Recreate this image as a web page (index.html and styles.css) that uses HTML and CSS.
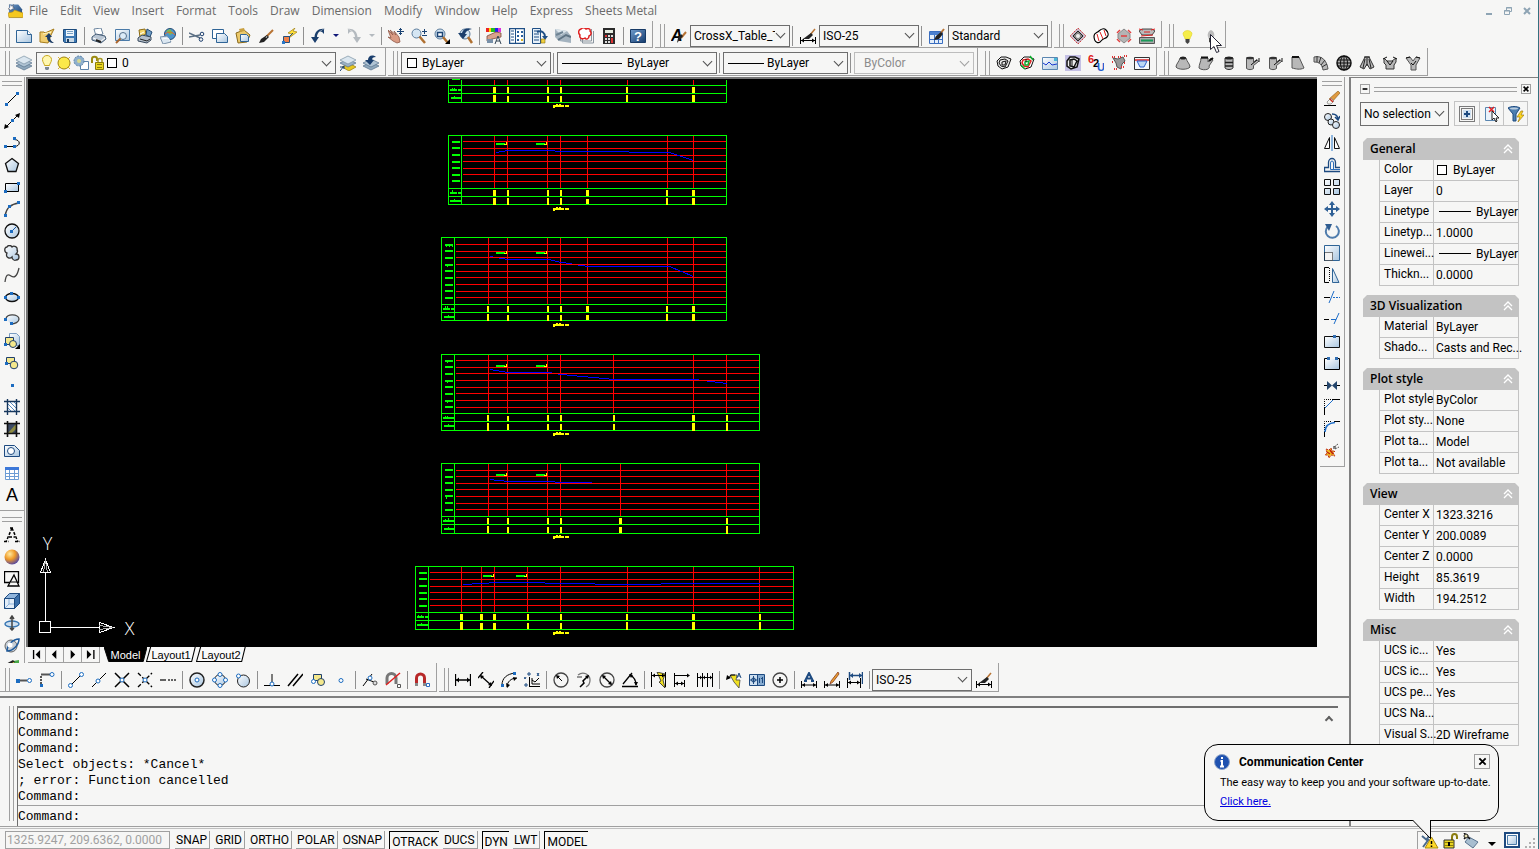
FILE: index.html
```html
<!DOCTYPE html>
<html lang="en">
<head>
<meta charset="utf-8">
<title>Drawing editor</title>
<link rel="stylesheet" href="styles.css">
</head>
<body>
<svg class="sprite" aria-hidden="true">
<defs>
<linearGradient id="gb" x1="0" y1="0" x2="1" y2="1"><stop offset="0" stop-color="#fff"/><stop offset="1" stop-color="#a9c6e0"/></linearGradient>
<linearGradient id="gg" x1="0" y1="0" x2="0" y2="1"><stop offset="0" stop-color="#ffe98a"/><stop offset="1" stop-color="#d8a010"/></linearGradient>
<linearGradient id="gn" x1="0" y1="0" x2="1" y2="1"><stop offset="0" stop-color="#6f9ccc"/><stop offset="1" stop-color="#143a6c"/></linearGradient>
<radialGradient id="go" cx=".35" cy=".3" r=".8"><stop offset="0" stop-color="#ffe9a0"/><stop offset=".45" stop-color="#f09a28"/><stop offset="1" stop-color="#3a3ab8"/></radialGradient>
<symbol id="app" viewBox="0 0 16 16"><path d="M1 1h10l4 5v9H1z" fill="url(#gn)"/><path d="M2 1l2 2 2-2-1 3 2 1-3 1-1 2-1-2H0l2-2z" fill="#fff" stroke="#223" stroke-width=".4"/><path d="M0 10l5-1 2-2 9 3v5H1z" fill="#f4c820" stroke="#b88a10" stroke-width=".6"/></symbol>
<symbol id="new" viewBox="0 0 16 16"><path d="M.5 2.500h11l4 4v8H.5z" fill="url(#gb)" stroke="#2f6496"/><path d="M11.500 2.500v4h4" fill="#fff" stroke="#2f6496"/></symbol>
<symbol id="open" viewBox="0 0 16 16"><path d="M1 4h4l1 1 9-4-3 6-3 8-8-1z" fill="#f0cd70" stroke="#a67c1c"/><path d="M4 6l8-2-4 4" fill="none" stroke="#fff4c0"/><path d="M15 15c-4 0-7-2-7-6H6l4-4 3 4h-2c0 3 2 5 4 6z" fill="#1d3d66"/></symbol>
<symbol id="save" viewBox="0 0 16 16"><path d="M1.500 1.500h13v13h-12l-1-1z" fill="#3d79b4" stroke="#1c4a7c"/><path d="M4 2h8v6H4z" fill="#eef5fb"/><path d="M5 3.500h6M5 5.500h6" stroke="#78a0c4"/><path d="M4 10h8v4H4z" fill="#c9d8e4"/><path d="M5 11h2v3H5z" fill="#1c3c60"/></symbol>
<symbol id="print" viewBox="0 0 16 16"><path d="M3 1l7-1 2 6-7 2z" fill="#fff" stroke="#6d86a0"/><path d="M1 9l4-3 9 2 1 3-5 4-9-3z" fill="#b9c6d4" stroke="#435a74"/><path d="M2 10l8 3 4-3" fill="none" stroke="#fff"/><path d="M5 12l5 2" stroke="#222" stroke-width="2"/></symbol>
<symbol id="preview" viewBox="0 0 16 16"><path d="M1.500 1.500h14v11h-14z" fill="url(#gb)" stroke="#4a7aa8"/><circle cx="9" cy="8" r="3.500" fill="#dcebf7" stroke="#54708c"/><path d="M6.500 10.500L2 15" stroke="#a8642c" stroke-width="2"/></symbol>
<symbol id="publish" viewBox="0 0 16 16"><path d="M2 2l6-1 1 5-6 3z" fill="#f6d668" stroke="#8a6a14"/><path d="M10 1l5 3-2 5-4-2z" fill="#6f9cc4" stroke="#244c74"/><path d="M1 10l4-3 9 2v3l-4 3-9-2z" fill="#b5c0cc" stroke="#36485c"/><path d="M3 11l7 2 3-2" stroke="#222" fill="none"/><path d="M3 6l4-2" stroke="#fff"/></symbol>
<symbol id="web" viewBox="0 0 16 16"><circle cx="10" cy="6" r="5.500" fill="#4e94cc" stroke="#244c74"/><path d="M6 3l4-2 3 4-3 2z" fill="#7cb854"/><path d="M5 6c3-3 8-2 10 1" fill="none" stroke="#e06a30"/><path d="M0 9l7-1 4 6-8 2z" fill="#dbe7f1" stroke="#7a92aa"/><path d="M2 11l6-1 2 3" fill="none" stroke="#fff"/></symbol>
<symbol id="cut" viewBox="0 0 16 16"><path d="M0 5l11 5M0 9l11-2" stroke="#5b6f84" stroke-width="1.500"/><circle cx="13" cy="6" r="1.800" fill="none" stroke="#1d3f6e"/><circle cx="12" cy="11.500" r="1.800" fill="none" stroke="#1d3f6e"/></symbol>
<symbol id="copy" viewBox="0 0 16 16"><path d="M.5 1.500h11v9H.5z" fill="#fff" stroke="#2f6496"/><path d="M4.500 5.500h8l3 3v6h-11z" fill="url(#gb)" stroke="#2f6496"/></symbol>
<symbol id="paste" viewBox="0 0 16 16"><path d="M1 5l8-3 6 5-3 7-9 1z" fill="#ecc96a" stroke="#8a6a1c"/><path d="M4 1l5-1 1 3-5 1z" fill="#c9a040"/><path d="M5.500 6.500h6l2 2v5h-8z" fill="url(#gb)" stroke="#2f6496"/></symbol>
<symbol id="match" viewBox="0 0 16 16"><path d="M15 2L8 9" stroke="#b87333" stroke-width="2"/><path d="M9 7l2 2-5 5-5 1 2-4z" fill="#222"/><path d="M8 10l1-2" stroke="#bbb"/></symbol>
<symbol id="block" viewBox="0 0 16 16"><path d="M14 0L7 5l4 1-3 4 8-6-4-1z" fill="#ffe038" stroke="#a08010" stroke-width=".7"/><path d="M2.500 8.500h6v6h-6z" fill="#f08048" stroke="#27507c"/><path d="M1 13h3v3H1z" fill="#2a78c8"/><path d="M8 9l4-4" stroke="#27507c"/></symbol>
<symbol id="undo" viewBox="0 0 16 16"><path d="M15 1C9 0 5 3 4.500 9H1l4 6 4-6H7c0-3 2-7 8-8z" fill="#1b3f6d"/><path d="M14 1v5c-2-3-4-3-5-2z" fill="#1b3f6d"/></symbol>
<symbol id="redo" viewBox="0 0 16 16"><path d="M1 1c6-1 10 2 10.500 8H15l-4 6-4-6h2C9 6 7 2 1 1z" fill="#b4babf"/><path d="M2 1v5c2-3 4-3 5-2z" fill="#b4babf"/></symbol>
<symbol id="pan" viewBox="0 0 16 16"><path d="M0 2l5 5-3-5 6 5-2-4 5 6 1 5-3 1-4-2-5-4 3 1z" fill="#d99b84" stroke="#8f5848" stroke-width=".8"/><path d="M12.500 0v7M9 3.500h7M11 1.500h3M11 5.500h3" stroke="#1c4474" fill="none"/></symbol>
<symbol id="zoomrt" viewBox="0 0 16 16"><circle cx="5.500" cy="5.500" r="4.500" fill="#d5e6f3" stroke="#5c7c9c"/><path d="M8.500 8.500L14 15" stroke="#b07030" stroke-width="2.500"/><path d="M11 3.500h5M13.500 1v5M11 7.500h5" stroke="#1c4474"/></symbol>
<symbol id="zoomwin" viewBox="0 0 16 16"><circle cx="6" cy="6" r="5" fill="#d5e6f3" stroke="#5c7c9c"/><path d="M3.500 4.500h5v4h-5z" fill="#fff" stroke="#1c4474" stroke-width="1.500"/><path d="M9 9l5 6" stroke="#b07030" stroke-width="2.500"/><path d="M16 11v5h-5z"/></symbol>
<symbol id="zoomprev" viewBox="0 0 16 16"><circle cx="8" cy="6" r="5" fill="#d5e6f3" stroke="#5c7c9c"/><path d="M11 9l4 6" stroke="#b07030" stroke-width="2.500"/><path d="M15 1C10-1 6 1 5 5H1l5 6 4-5H8c1-3 3-4 7-5z" fill="#1b3f6d"/></symbol>
<symbol id="props" viewBox="0 0 16 16"><path d="M0 0h5v4H0z" fill="#e22"/><path d="M5 0h4v4H5z" fill="#2b2"/><path d="M9 0h4v4H9z" fill="#22e"/><path d="M3 0h2v4H3z" fill="#fd0"/><path d="M12 0h3v4h-3z" fill="#d3d"/><path d="M1 8l9-4 5 1v4L6 11l-5 2z" fill="#d9a28c" stroke="#7c4a3c" stroke-width=".8"/><path d="M9 16l3-8 3 8M10 13h4" fill="none" stroke="#345"/><path d="M1 11h6v4H1z" fill="#7890a8"/></symbol>
<symbol id="dcenter" viewBox="0 0 16 16"><path d="M.5.500h15v15H.5z" fill="#fff" stroke="#1f4f86" stroke-width="1.500"/><path d="M6.500 0v16" stroke="#1f4f86"/><path d="M2 3h3M2 6h3M2 9h3M2 12h3" stroke="#1f4f86"/><path d="M8 3h2v2H8zM12 3h2v2h-2zM8 7h2v2H8zM12 7h2v2h-2zM8 11h2v2H8z" fill="#2a5f9c"/><path d="M12 11h2v2h-2z" fill="#d8b020"/></symbol>
<symbol id="tools" viewBox="0 0 16 16"><path d="M.5.500h8v15h-8z" fill="#e7f0f8" stroke="#1f4f86"/><path d="M2 3h5M2 6h5M2 9h5M2 12h5" stroke="#1f4f86"/><path d="M5 4c5-2 8 1 8 5" fill="none" stroke="#1f4f86" stroke-width="2"/><path d="M10 8h6l-3 4z" fill="#1f4f86"/><path d="M9 11h4v4H9z" fill="#f0d040" stroke="#8a7010" stroke-width=".6"/></symbol>
<symbol id="sheets" viewBox="0 0 16 16"><path d="M0 1l12 2 4 5v7L4 13l-4-4z" fill="#a4b3bf"/><path d="M0 1l12 2-6 4z" fill="#dce6ec"/><path d="M3 12l8-5 5 2" fill="none" stroke="#5f7484" stroke-width="2"/><path d="M1 7l7-3" stroke="#6f8494" stroke-width="2"/></symbol>
<symbol id="markup" viewBox="0 0 16 16"><path d="M4.500 5v10h11V3M2.500 3v10h11V1" fill="none" stroke="#8a959f"/><path d="M3 1c2-2 4-1 5 0 2-1 5 0 4 2 2 2 1 4-1 5 0 3-3 4-4 2-3 2-6 0-5-3C0 5 0 2 3 1z" fill="#fff" stroke="#e02020" stroke-width="1.500"/></symbol>
<symbol id="calc" viewBox="0 0 16 16"><path d="M2 0h12v16H2z" fill="#2b2b2b"/><path d="M4 2h8v3H4z" fill="#e4ece0"/><path d="M4 7h2v2H4zM7 7h2v2H7zM10 7h2v2h-2zM4 10h2v2H4zM7 10h2v2H7zM4 13h2v2H4zM7 13h2v2H7z" fill="#ddd"/><path d="M4 7h2v2H4zM10 10h2v5h-2z" fill="#d33"/></symbol>
<symbol id="help" viewBox="0 0 16 16"><path d="M.5 1.500h15v13H.5z" fill="url(#gn)" stroke="#173a66"/><text x="8" y="13" text-anchor="middle" class="q">?</text></symbol>
<symbol id="tstyle" viewBox="0 0 16 16"><text x="0" y="13" class="ai">A</text><path d="M15 4l-5 6" stroke="#b87333" stroke-width="2"/><path d="M12 8l-6 7 1-5 3-4z" fill="#222"/></symbol>
<symbol id="dstyle" viewBox="0 0 16 16"><path d="M15 1l-5 6" stroke="#b87333" stroke-width="1.500"/><path d="M11 5l2 2-4 4H3z" fill="#222"/><path d="M.5 9v7M15.500 9v7M1 12.500h14" stroke="#000"/><path d="M1 12.500l3-2v4zM15 12.500l-3-2v4z"/></symbol>
<symbol id="tbstyle" viewBox="0 0 16 16"><path d="M.5 3.500h13v12H.5z" fill="#e4eefa" stroke="#3a6ec0"/><path d="M1 4h13v3H1z" fill="#4a80d0"/><path d="M1 11.500h13M5.500 7v8M9.500 7v8" stroke="#3a6ec0"/><path d="M15 1l-4 5" stroke="#b87333" stroke-width="2"/><path d="M12 4l2 2-4 5-5 1 2-4z" fill="#222"/></symbol>
<symbol id="sm1" viewBox="0 0 16 16"><path d="M8 0l8 8-8 8-8-8z" fill="#c8b8c8" stroke="#d04848" stroke-dasharray="2 1"/><path d="M8 3l5 5-5 5-5-5z" fill="#888" stroke="#222"/><circle cx="8" cy="8" r="2" fill="#eee"/></symbol>
<symbol id="sm2" viewBox="0 0 16 16"><path d="M1 8c0-3 3-3 5-5s5-3 7-1 3 5 1 7-4 1-6 4-7 2-7-5z" fill="#fff" stroke="#000" stroke-width="1.200"/><path d="M4 6l2 7M7 4l3 7M11 2l2 6" stroke="#e02020"/></symbol>
<symbol id="sm3" viewBox="0 0 16 16"><path d="M8 1l6 5v4l-6 5-6-5V6z" fill="#b4b4b4" stroke="#888"/><path d="M1 5l3-3M12 2l3 3M1 11l3 3M12 14l3-3M5 8h6" stroke="#e04040" stroke-width="1.500"/></symbol>
<symbol id="sm4" viewBox="0 0 16 16"><path d="M0 3l3-2h10l3 2-3 4H3z" fill="#bbb" stroke="#222" stroke-width=".8"/><path d="M0 1l4 1M12 2l4-1M5 4h6M2 8l12-1" stroke="#e02020"/><path d="M.5 9.500h15v6H.5z" fill="#aaa" stroke="#555"/><path d="M2 12.500h12" stroke="#1a9a5a" stroke-width="2"/></symbol>
<symbol id="bulb" viewBox="0 0 16 16"><path d="M5 11c0-2-2-3-2-6a5 4.500 0 0 1 9 0c0 3-2 4-2 6z" fill="#f6ee4a" stroke="#e0d020" stroke-width=".6"/><path d="M5.500 11h4v3l-2 2-2-2z" fill="#444"/></symbol>
<symbol id="bulboff" viewBox="0 0 16 16"><path d="M6 11c-2-3-2-7 2-9 4 2 4 6 2 9z" fill="#bbb"/><path d="M6 10h4v4l-2 1-2-1z" fill="#444"/></symbol>
<symbol id="layers" viewBox="0 0 16 16"><path d="M0 11l8-4 8 4-8 4z" fill="#8fa8bc" stroke="#54708a" stroke-width=".7"/><path d="M0 8l8-4 8 4-8 4z" fill="#b0c4d4" stroke="#54708a" stroke-width=".7"/><path d="M0 5l8-4 8 4-8 4z" fill="#dae6ef" stroke="#7890a4" stroke-width=".7"/></symbol>
<symbol id="lcur" viewBox="0 0 16 16"><path d="M2 12l7-4 7 4-7 4z" fill="#e8c820" stroke="#927810" stroke-width=".7"/><path d="M0 8l8-4 8 4-8 4z" fill="#9cb2c6" stroke="#54708a" stroke-width=".7"/><path d="M0 5l8-4 8 4-8 4z" fill="#dae6ef" stroke="#7890a4" stroke-width=".7"/><path d="M0 16l4-5v3M0 12h4" fill="none" stroke="#174076"/></symbol>
<symbol id="lprev" viewBox="0 0 16 16"><path d="M0 11l8-4 8 4-8 4z" fill="#8fa8bc" stroke="#54708a" stroke-width=".7"/><path d="M0 8l8-4 8 4-8 4z" fill="#b0c4d4" stroke="#54708a" stroke-width=".7"/><path d="M13 2C9-1 5 1 5 5H2l5 5 4-5H9c0-2 1-3 4-3z" fill="#1b3f6d"/></symbol>
<symbol id="lamp" viewBox="0 0 16 16"><path d="M5.500 10.500c0-2-2-3-2-6a4.500 4 0 0 1 9 0c0 3-2 4-2 6z" fill="#fff8b0" stroke="#c8a820"/><path d="M6 12h4v2l-1 1H7l-1-1z" fill="#7c8894"/></symbol>
<symbol id="sun" viewBox="0 0 16 16"><path d="M2 2l2 2M14 2l-2 2M2 14l2-2M14 14l-2-2" stroke="#d8b030"/><circle cx="8" cy="8" r="6" fill="#fbe94a" stroke="#a08414"/></symbol>
<symbol id="freeze" viewBox="0 0 16 16"><path d="M7.500 6.500h8v8h-8z" fill="#fff" stroke="#5a82aa"/><circle cx="6" cy="6" r="5" fill="#8fb0cc" stroke="#5a82aa" stroke-dasharray="2 1"/><circle cx="6" cy="6" r="2" fill="#d6d890"/></symbol>
<symbol id="lock" viewBox="0 0 16 16"><path d="M2 8V4c0-3 5-3 5 0v2" fill="none" stroke="#9a8a10" stroke-width="2"/><path d="M8 7V5c0-2 4-2 4 0v2" fill="none" stroke="#a89820" stroke-width="1.500"/><path d="M5.500 7.500h8v7h-8z" fill="#e8d420" stroke="#8a7c0c"/><path d="M7 9.500h5M7 12.500h5" stroke="#8a7c0c"/></symbol>
<symbol id="cc" viewBox="0 0 16 16"><path d="M1 6l4-4h5l5 2-3 8-6 2-4-3z" fill="#e8e8e8" stroke="#111"/><path d="M4 5l5-1 3 2-3 6-4-1-2-3zM6 7l4-1-1 4-3 0z" fill="none" stroke="#111"/></symbol>
<symbol id="ccc" viewBox="0 0 16 16"><path d="M1 6l4-4h5l5 2-3 8-6 2-4-3z" fill="#fff" stroke="#111"/><path d="M4 5l5-1 3 2-3 6-4-1-2-3z" fill="none" stroke="#e02020" stroke-width="1.500"/><path d="M6 7l4-1-1 4-3 0zM11 1l3 4M2 10l4 4" fill="none" stroke="#10b030" stroke-width="1.500"/><path d="M7 4v3" stroke="#111"/></symbol>
<symbol id="prof" viewBox="0 0 16 16"><path d="M.5 2.500h15v12H.5z" fill="url(#gb)" stroke="#5a86b0"/><path d="M1 8l3 2 3-3 3 3 5-1" fill="none" stroke="#1838d0"/><path d="M12 3h3v3h-3z" fill="#48b8d8"/></symbol>
<symbol id="ccb" viewBox="0 0 16 16"><path d="M0 0h16v16H0z" fill="#c4c0e4"/><path d="M2 6l3-4h5l4 2-2 8-6 2-4-3zM5 5l4-1 3 2-3 6-4-1z" fill="#eee" stroke="#111" stroke-width="1.500"/><path d="M7 4v8" stroke="#111"/></symbol>
<symbol id="six" viewBox="0 0 16 16"><text x="0" y="8" class="s6 red">6</text><text x="5" y="12" class="s6">2</text><text x="9" y="16" class="s6 blu">U</text></symbol>
<symbol id="bits" viewBox="0 0 16 16"><path d="M2 3l5 1 5-2 2 4-3 3-1 5-4-2-1-4z" fill="#999" stroke="#555"/><path d="M1 2h3M7 2h3M13 1h3M1 7h2M13 8h2M3 14h3M10 12h3" stroke="#e03030" stroke-width="2" stroke-dasharray="1 1"/></symbol>
<symbol id="chan" viewBox="0 0 16 16"><path d="M.5 2.500h15v12H.5z" fill="#f4f8fc" stroke="#333"/><path d="M1 5h14" stroke="#e02020" stroke-width="1.500"/><path d="M3 6l3 6h4l3-6z" fill="#bcd8f4" stroke="#2a60d0"/></symbol>
<symbol id="p1" viewBox="0 0 16 16"><path d="M5 3h6c1 4 4 6 4 9-2 3-12 3-14 0 0-3 3-5 4-9z" fill="#b8b8b8" stroke="#555"/><ellipse cx="8" cy="3" rx="3" ry="1.500" fill="#222"/></symbol>
<symbol id="p2" viewBox="0 0 16 16"><path d="M3 3h7v4l3-4 2 2-4 6c2 4-7 5-10 2 0-4 2-6 2-10z" fill="#b8b8b8" stroke="#555"/><path d="M3 2.500h7M11 6l4-3" stroke="#111" stroke-width="2"/></symbol>
<symbol id="p3" viewBox="0 0 16 16"><path d="M4 3v10c2 2 6 2 8 0V3z" fill="#b8b8b8" stroke="#333"/><ellipse cx="8" cy="3" rx="4" ry="1.500" fill="#222"/><path d="M4 7.500h8M4 11h8" stroke="#222" stroke-width="1.500"/></symbol>
<symbol id="p4" viewBox="0 0 16 16"><path d="M2.500 3.500v10c2 1.500 5 1.500 7 0v-3l5-4-1.500-2-3.500 2.500v-3.500z" fill="#b8b8b8" stroke="#555"/><ellipse cx="6" cy="3" rx="4" ry="1.300" fill="#333"/><path d="M15 3v4M7 10l6-5" stroke="#111"/></symbol>
<symbol id="p5" viewBox="0 0 16 16"><path d="M2 2h7l5 11c-4 2-8 1-12 0z" fill="#b8b8b8" stroke="#555"/><path d="M2 2h7" stroke="#111" stroke-width="2"/></symbol>
<symbol id="p6" viewBox="0 0 16 16"><path d="M1 2c8-2 13 4 14 12l-5 1C9 10 7 7 1 7z" fill="#b8b8b8" stroke="#555"/><path d="M4 1v6M8 2L6 8M12 5L8 10M14 9l-5 3" stroke="#333"/></symbol>
<symbol id="p7" viewBox="0 0 16 16"><circle cx="8" cy="8" r="7" fill="#aaa" stroke="#111" stroke-width="1.500"/><path d="M1 8h14M2 5h12M2 11h12M8 1v14" stroke="#111"/><ellipse cx="8" cy="8" rx="3.500" ry="7" fill="none" stroke="#111"/></symbol>
<symbol id="p8" viewBox="0 0 16 16"><path d="M6 2h4l5 10-4 2-3-5-3 5-4-2z" fill="#b8b8b8" stroke="#333"/><path d="M5 2h6M8 3v8M6 4L4 13M10 4l2 9" stroke="#222"/></symbol>
<symbol id="p9" viewBox="0 0 16 16"><path d="M2 3l3 3h5l4-3v4l-2 3v4H4v-4L2 8z" fill="#b8b8b8" stroke="#333"/><path d="M1 4l4-2M15 4l-4-2M5 6l3 4 3-4" stroke="#111" fill="none"/></symbol>
<symbol id="p10" viewBox="0 0 16 16"><path d="M1 3l4-1 3 4 3-4 4 1-4 7v5H6v-5z" fill="#b8b8b8" stroke="#555"/><path d="M1 3l4-1M11 2l4 1M6 8l2 2 3-4" fill="none" stroke="#111"/></symbol>
<symbol id="line" viewBox="0 0 16 16"><path d="M2 14L14 2" class="k"/><path d="M1 12h3v3H1zM12 1h3v3h-3z" class="n"/></symbol>
<symbol id="xline" viewBox="0 0 16 16"><path d="M2 14L14 2" class="k"/><path d="M0 16l1-5 4 3zM16 0l-1 5-4-3z"/><path d="M7 6h3v3H7z" class="n"/></symbol>
<symbol id="pline" viewBox="0 0 16 16"><path d="M1 11.500h9c7 0 7-7 0-7" class="k"/><path d="M0 10h3v3H0zM9 10h3v3H9zM9 2h3v3H9z" class="n"/></symbol>
<symbol id="poly" viewBox="0 0 16 16"><path d="M8 1.500l6.500 5-2.500 8H4L1.500 6.500z" fill="url(#gb)" stroke="#111" stroke-width="1.300"/></symbol>
<symbol id="rect" viewBox="0 0 16 16"><path d="M1.500 4.500h13v8h-13z" fill="url(#gb)" stroke="#000"/><path d="M0 11h3v3H0zM13 3h3v3h-3z" class="n"/></symbol>
<symbol id="arc" viewBox="0 0 16 16"><path d="M1 15C2 8 6 3 15 2" class="g"/><path d="M0 13h3v3H0zM4 4h3v3H4zM13 0h3v3h-3z" class="n"/></symbol>
<symbol id="circle" viewBox="0 0 16 16"><circle cx="8" cy="8" r="7" fill="url(#gb)" stroke="#111" stroke-width="1.300"/><path d="M8 8l4-4" stroke="#1c5aa8"/><path d="M6 7h3v3H6z" class="n"/></symbol>
<symbol id="cloud" viewBox="0 0 16 16"><path d="M3 8C0 7 0 2 3 2c1-2 4-2 5 0 2-2 6 0 5 3 1 1 0 3-1 4 4 0 4 6 0 6-2 1-4-1-4-3-2 2-7 1-5-4z" fill="url(#gb)" stroke="#333" stroke-width="1.300"/></symbol>
<symbol id="spline" viewBox="0 0 16 16"><path d="M1 15c1-8 3-8 6-6s6 1 8-8" class="g"/></symbol>
<symbol id="ellip" viewBox="0 0 16 16"><ellipse cx="8" cy="8.500" rx="6.500" ry="4" fill="url(#gb)" stroke="#111" stroke-width="1.300"/><path d="M0 7h3v3H0zM13 7h3v3h-3zM6 3h3v3H6z" class="n"/></symbol>
<symbol id="earc" viewBox="0 0 16 16"><path d="M2 8c0-6 13-5 13 0 0 3-4 5-8 5z" fill="url(#gb)" stroke="none"/><path d="M2 8c0-6 13-5 13 0 0 3-4 5-8 5" class="g"/><path d="M0 7h3v3H0zM6 11h3v3H6z" class="n"/></symbol>
<symbol id="insblk" viewBox="0 0 16 16"><path d="M5.500 0.500h7l3 3v9h-10z" fill="url(#gb)" stroke="#7a9cc0"/><path d="M1.500 4.500h8v7h-8z" class="y"/><circle cx="9" cy="11" r="3.500" class="y"/><path d="M0 10h3v3H0z" class="n"/><path d="M16 11v5h-5z"/></symbol>
<symbol id="mkblk" viewBox="0 0 16 16"><path d="M2.500 2.500h8v6h-8z" class="y"/><circle cx="10" cy="10" r="3.800" class="y"/><path d="M1 7h3v3H1z" class="n"/></symbol>
<symbol id="point" viewBox="0 0 16 16"><path d="M7 7h3v3H7z" class="n"/></symbol>
<symbol id="hatch" viewBox="0 0 16 16"><path d="M3 3h10v9H3z" fill="#fff"/><path d="M3 8l5 5M3 4l9 9M6 3l7 7M10 3l3 3" stroke="#5a8cc0"/><path d="M0 2.500h16M0 12.500h16M3.500 0v16M12.500 0v16" stroke="#16365c" stroke-width="1.400"/></symbol>
<symbol id="grad" viewBox="0 0 16 16"><path d="M3 3h10v9H3z" fill="#3c4a64"/><path d="M4 12l8-9v5l-4 4z" fill="#8c8a40"/><path d="M0 2.500h16M0 12.500h16M3.500 0v16M12.500 0v16" stroke="#111" stroke-width="1.600"/></symbol>
<symbol id="region" viewBox="0 0 16 16"><path d="M.5 2.500h10l5 5v6H.5z" fill="url(#gb)" stroke="#1d4a80"/><circle cx="7" cy="8" r="3.500" fill="#fff" stroke="#1d4a80"/></symbol>
<symbol id="table" viewBox="0 0 16 16"><path d="M1.500 2.500h13v12h-13z" fill="#fff" stroke="#6c9cd4"/><path d="M1 2h14v3H1z" fill="#3c78d8"/><path d="M1 8.500h14M1 11.500h14M5.500 5v9M10.500 5v9" stroke="#6c9cd4"/></symbol>
<symbol id="mtext" viewBox="0 0 16 16"><text x="8" y="14" text-anchor="middle" class="ma">A</text></symbol>
<symbol id="dasha" viewBox="0 0 16 16"><path d="M8 1L2 15M8 1l6 14M0 14.500h5M11 14.500h5M5 10h6M6 1h4" stroke="#000" stroke-width="1.500" stroke-dasharray="3 1.500" fill="none"/></symbol>
<symbol id="ball" viewBox="0 0 16 16"><circle cx="8" cy="8" r="7.500" fill="url(#go)"/></symbol>
<symbol id="shapes" viewBox="0 0 16 16"><path d="M.5.500h14v11H.5z" class="k" stroke-width="1.300"/><path d="M10 4l5 11H4z" fill="#f6f6f5" stroke="#000" stroke-width="1.300"/><path d="M7 11h6" class="k"/></symbol>
<symbol id="cube" viewBox="0 0 16 16"><path d="M.5 5.500l5-5h10v10l-5 5H.5z" fill="#8fb4dc" stroke="#1d4a80"/><path d="M.5 5.500h10v10H.5z" fill="#e4eef8" stroke="#1d4a80"/><path d="M10.500 5.500l5-5v10l-5 5z" fill="#3a6ea8" stroke="#1d4a80"/><path d="M1 15l4-4h5M5 6v5" fill="none" stroke="#8fb4dc"/></symbol>
<symbol id="orbit" viewBox="0 0 16 16"><ellipse cx="8" cy="9" rx="7" ry="3" fill="#cfe0f0" stroke="#3a78b4" stroke-width="1.500"/><path d="M8 1v14M6 4l2-3 2 3M6 13l2 2 2-2" fill="none" stroke="#444" stroke-width="1.500"/></symbol>
<symbol id="sph" viewBox="0 0 16 16"><circle cx="7" cy="9" r="6" fill="#c4ccd4" stroke="#666"/><path d="M3 14c6 0 12-6 12-12-6 0-12 6-12 12z" fill="none" stroke="#1d5a9c" stroke-width="1.500"/><circle cx="6" cy="8" r="2.500" fill="#fff"/></symbol>
<symbol id="land" viewBox="0 0 16 16"><path d="M1 6l8-4 6-1v12H1z" fill="#48a848"/><path d="M0 6l9-5 2 2-8 4z" fill="#222"/><path d="M4 6l6-3v5H4z" fill="#e8c838"/></symbol>
<symbol id="erase" viewBox="0 0 16 16"><path d="M0 14.500h12" class="k"/><path d="M14 0l2 2-8 9-3-3z" fill="#e09a40" stroke="#8a5a18" stroke-width=".6"/><path d="M7 7l3 3-3 3H4l-1-2z" fill="#f4f4ee" stroke="#666" stroke-width=".6"/><path d="M6 8l3 3" stroke="#d03020" stroke-width="1.500"/></symbol>
<symbol id="mcopy" viewBox="0 0 16 16"><circle cx="4" cy="4" r="3.500" fill="url(#gb)" stroke="#222"/><circle cx="7" cy="9" r="3" fill="url(#gb)" stroke="#222"/><circle cx="12" cy="12" r="3.500" fill="url(#gb)" stroke="#222"/><path d="M8 1c4 0 6 2 6 6M11 4l3 3 2-4" fill="none" stroke="#1d4a80" stroke-width="1.500"/></symbol>
<symbol id="mirror" viewBox="0 0 16 16"><path d="M8 0v16" stroke="#2a78c8"/><path d="M5.500 2.500v11h-5zM10.500 2.500v11h5z" fill="#fff" stroke="#111"/></symbol>
<symbol id="offset" viewBox="0 0 16 16"><path d="M16 14.500H.5v-4h4V5.500a3.500 4 0 0 1 7 0v5H16" fill="none" stroke="#1d4a80" stroke-width="1.300"/><path d="M16 12.500H6.500V6a1.500 2 0 0 1 3 0v6" fill="none" stroke="#2a6cb8"/></symbol>
<symbol id="array" viewBox="0 0 16 16"><path d="M.5.500h6v6h-6zM9.500.500h6v6h-6zM.5 9.500h6v6h-6zM9.500 9.500h6v6h-6z" fill="url(#gb)" stroke="#111"/></symbol>
<symbol id="move" viewBox="0 0 16 16"><path d="M8 0l3 4H9v3h3V5l4 3-4 3V9H9v3h2l-3 4-3-4h2V9H4v2L0 8l4-3v2h3V4H5z" fill="#2f6096"/></symbol>
<symbol id="rot" viewBox="0 0 16 16"><path d="M4 3.500a6.500 6.500 0 1 0 8-.5" fill="none" stroke="#4f7cac" stroke-width="2"/><path d="M1 1h7L5 8z" fill="#2f5c90"/></symbol>
<symbol id="scale" viewBox="0 0 16 16"><path d="M.5.500h15v15H.5z" fill="url(#gb)" stroke="#2f6496"/><path d="M1 7.500h8v8H1z" fill="#f4f4f4"/><path d="M.5 7.500h8v8h-8z" fill="none" stroke="#000" stroke-dasharray="1 1"/></symbol>
<symbol id="stretch" viewBox="0 0 16 16"><path d="M8.500 1.500l6.500 14H8.500z" fill="url(#gb)" stroke="#2f6496"/><path d="M5 .5H.5v15H5" class="k"/><path d="M5.500 1v14" stroke="#000" stroke-dasharray="1 1"/></symbol>
<symbol id="trim" viewBox="0 0 16 16"><path d="M0 8.500h6" class="k"/><path d="M5 14L10 2M9 8.500h7" stroke="#1c6cc8" fill="none"/><path d="M11 8.500h1M14 8.500h1" stroke="#f6f6f5"/></symbol>
<symbol id="extend" viewBox="0 0 16 16"><path d="M0 8.500h5M7 8.500h1" class="k"/><path d="M7 8.500h5M10 13L15 2" stroke="#1c6cc8"/></symbol>
<symbol id="brkpt" viewBox="0 0 16 16"><path d="M.5 3.500h15v11H.5z" fill="url(#gb)" stroke="#111"/><path d="M9 2h3v3H9z" fill="#2f6cb0"/></symbol>
<symbol id="brk" viewBox="0 0 16 16"><path d="M1 4h14v10H1z" fill="url(#gb)"/><path d="M3 3.500H.5v11h15v-11H13" class="k"/><path d="M3 2h3v3H3zM11 2h3v3h-3z" fill="#2f6cb0"/></symbol>
<symbol id="join" viewBox="0 0 16 16"><path d="M0 8.500h5M11 8.500h5" class="k"/><path d="M3 4l5 4.500L3 13zM13 4L8 8.500l5 4.500z" fill="#24466c"/></symbol>
<symbol id="chamf" viewBox="0 0 16 16"><path d="M.5 16V9M8 .5h8" class="k"/><path d="M.5 9V.500H8" fill="none" stroke="#000" stroke-dasharray="1 1"/><path d="M1 9l8-8" stroke="#1c6cc8"/></symbol>
<symbol id="fillet" viewBox="0 0 16 16"><path d="M.5 16V10M10 .5h6" class="k"/><path d="M.5 9V.500H8" fill="none" stroke="#000" stroke-dasharray="1 1"/><path d="M1 11c0-6 4-9 10-9.500" fill="none" stroke="#1c6cc8" stroke-width="1.500"/></symbol>
<symbol id="explode" viewBox="0 0 16 16"><path d="M2 6l3 1 2-2 1 3 3 0-2 2 2 3-4-1-2 3-1-3-3 0 2-2z" fill="#f0c020" stroke="#c03018" stroke-dasharray="2 1"/><path d="M9 3h3v3H9z" fill="#888"/><path d="M10 4l4-3M11 6l4-2" stroke="#555" stroke-dasharray="2 1"/><path d="M3 9l3 2M6 7l3 4" stroke="#c02010" stroke-width="1.500"/></symbol>
<symbol id="o1" viewBox="0 0 16 16"><path d="M2 8.500h9" stroke="#555" stroke-width="2"/><path d="M0 7h4v4H0z" class="n"/><circle cx="13.500" cy="8.500" r="2" class="o"/></symbol>
<symbol id="o2" viewBox="0 0 16 16"><path d="M2 12V3" stroke="#555" stroke-width="2" stroke-dasharray="2 1"/><path d="M2 2.500h9" stroke="#555" stroke-width="2"/><path d="M1 12h3v3H1z" class="n"/><circle cx="13" cy="2.500" r="2" class="o"/></symbol>
<symbol id="o3" viewBox="0 0 16 16"><path d="M3 13L13 3" class="k"/><circle cx="2.500" cy="13.500" r="2" class="o"/><circle cx="13.500" cy="2.500" r="2" class="o"/></symbol>
<symbol id="o4" viewBox="0 0 16 16"><path d="M1 15L15 1" class="k"/><circle cx="7" cy="9" r="2" class="o"/></symbol>
<symbol id="o5" viewBox="0 0 16 16"><path d="M1 1l14 14M1 15L15 1" class="k" stroke-width="1.500"/><circle cx="8" cy="8" r="2" class="o"/></symbol>
<symbol id="o6" viewBox="0 0 16 16"><path d="M1 15L15 1M1 1l14 14" class="k" stroke-width="1.300" stroke-dasharray="4 2"/><circle cx="8" cy="8" r="2" class="o"/></symbol>
<symbol id="o7" viewBox="0 0 16 16"><path d="M0 8h6M8 8h2M11 8h2M14 8h2" stroke="#333" stroke-width="1.500"/></symbol>
<symbol id="o8" viewBox="0 0 16 16"><circle cx="8" cy="8" r="7" fill="url(#gb)" stroke="#222" stroke-width="1.500"/><circle cx="8" cy="8" r="2" class="o"/></symbol>
<symbol id="o9" viewBox="0 0 16 16"><circle cx="8" cy="8" r="5.500" fill="url(#gb)" stroke="#222"/><circle cx="8" cy="2.500" r="2" class="o"/><circle cx="8" cy="13.500" r="2" class="o"/><circle cx="2.500" cy="8" r="2" class="o"/><circle cx="13.500" cy="8" r="2" class="o"/></symbol>
<symbol id="o10" viewBox="0 0 16 16"><circle cx="8.500" cy="9" r="6" fill="url(#gb)" stroke="#222"/><circle cx="3.500" cy="4" r="2" class="o"/></symbol>
<symbol id="o11" viewBox="0 0 16 16"><path d="M8 2v9M0 13.500h16" class="k"/><circle cx="8" cy="12" r="2" class="o"/></symbol>
<symbol id="o12" viewBox="0 0 16 16"><path d="M1 14L11 2M6 14L16 2" class="k" stroke-width="1.500"/></symbol>
<symbol id="o13" viewBox="0 0 16 16"><path d="M3.500 2.500h8v6h-8z" class="y"/><circle cx="11" cy="10" r="3.500" class="y"/><circle cx="3.500" cy="9.500" r="2" class="o"/></symbol>
<symbol id="o14" viewBox="0 0 16 16"><circle cx="8" cy="8.500" r="2" class="o"/></symbol>
<symbol id="o15" viewBox="0 0 16 16"><path d="M1 14L10 2M4 7l8 3" class="k"/><circle cx="8" cy="6" r="2" class="o"/><circle cx="13" cy="11" r="2" fill="#ddd" stroke="#555"/></symbol>
<symbol id="o16" viewBox="0 0 16 16"><path d="M2 12V6a4 4 0 0 1 9 0v6" fill="none" stroke="#777" stroke-width="3"/><path d="M1 13L15 1" stroke="#e02020" stroke-width="1.500"/><path d="M12.500 12.500h3v3h-3z" fill="#fff" stroke="#555"/></symbol>
<symbol id="o17" viewBox="0 0 16 16"><path d="M2.500 12V6a4 4 0 0 1 8 0v6" fill="none" stroke="#b82828" stroke-width="3"/><path d="M1 11h3v3H1zM9 11h3v3H9z" fill="#888"/><path d="M12.500 11.500h3v3h-3z" fill="#fff" stroke="#2a6cc0"/></symbol>
<symbol id="d1" viewBox="0 0 16 16"><path d="M.5 2v12M15.500 2v12M1 8h14" class="k" stroke-width="1.300"/><path d="M1 8l3-2.500v5zM15 8l-3-2.500v5z"/></symbol>
<symbol id="d2" viewBox="0 0 16 16"><path d="M5 0L0 6M16 9l-5 7M3 4l10 9" class="k" stroke-width="1.300"/><path d="M2 3l4 1-3 3zM14 14l-4-1 3-3z"/></symbol>
<symbol id="d3" viewBox="0 0 16 16"><path d="M1 13C1 6 6 2 14 1M6 15c0-5 4-9 10-9" class="k"/><path d="M5 11l1 5 3-3zM16 6l-4-1 1 4z"/><path d="M0 12h3v3H0zM12 0h3v3h-3z" class="n"/></symbol>
<symbol id="d4" viewBox="0 0 16 16"><path d="M5.500 5v10M5 14.500h11M8 6v6h8M8 8l3 2 4-4" class="k"/><path d="M0 5l1 2 1-2M4 1h2v2H4zM13 1l2 3M15 1l-2 3M1 12h2v2H1z" fill="none" stroke="#1d4a80"/></symbol>
<symbol id="d5" viewBox="0 0 16 16"><circle cx="8" cy="8" r="7" fill="none" stroke="#444" stroke-width="1.300"/><path d="M9 9L4 4" class="k"/><path d="M3 3l4 1-3 3z"/></symbol>
<symbol id="d6" viewBox="0 0 16 16"><path d="M2 3c5-4 12-1 12 5 0 4-2 6-4 7M1 5h5" fill="none" stroke="#777" stroke-width="1.300"/><path d="M4 15l4-4-1-2 5-5" class="k" stroke-width="1.500"/><path d="M13 3l-1 4-3-3z"/></symbol>
<symbol id="d7" viewBox="0 0 16 16"><circle cx="8" cy="8" r="7" fill="none" stroke="#444" stroke-width="1.300"/><path d="M4 4l8 8" class="k" stroke-width="1.300"/><path d="M3 3l4 1-3 3zM13 13l-4-1 3-3z"/></symbol>
<symbol id="d8" viewBox="0 0 16 16"><path d="M0 14.500h16M1 12L10 1M8 3c4 2 6 5 6 10" class="k" stroke-width="1.300"/><path d="M7 2l4 1-2 3zM12 10h4l-2 4z"/></symbol>
<symbol id="d9" viewBox="0 0 16 16"><path d="M6 0l8 2-2 6 2 8-6-6 2-1z" fill="#f0e020" stroke="#222" stroke-width=".8"/><path d="M.5 0v15M14.500 0v15M1 3.500h13" class="k"/><path d="M1 3.500l3-2v4zM14 3.500l-3-2v4z"/></symbol>
<symbol id="d10" viewBox="0 0 16 16"><path d="M.5 1v14M1 3.500h14M10.500 8v7M1 11.500h9" class="k"/><path d="M16 3.500l-3-2v4zM10 11.500l-3-2v4zM1 11.500l3-2v4z"/></symbol>
<symbol id="d11" viewBox="0 0 16 16"><path d="M.5 1v14M5.500 1v14M10.500 1v14M15.500 1v14M1 5.500h14" class="k"/><path d="M5 5.500l-2-2v4zM6 5.500l2-2v4zM15 5.500l-2-2v4z"/></symbol>
<symbol id="d12" viewBox="0 0 16 16"><path d="M4 3h7l-1 5h4l-1 8-5-6z" fill="#f0e020" stroke="#444" stroke-width=".8"/><path d="M9 3H5L2 7" class="k"/><path d="M0 8l1-5 4 3z"/><path d="M11 6l2-5 2 5M12 4h2" fill="none" stroke="#1d4a80"/></symbol>
<symbol id="d13" viewBox="0 0 16 16"><path d="M.5 2.500h15v11H.5z" fill="#cfe0f0" stroke="#1d4a80"/><path d="M8 3h7v10H8z" fill="#86abd0"/><circle cx="4.500" cy="8" r="2" fill="none" stroke="#1d4a80"/><path d="M4.500 4v8M1 8h7M8.500 3v10M10.500 6v5M13.500 5v6M13 6l-1 1" stroke="#1d4a80"/></symbol>
<symbol id="d14" viewBox="0 0 16 16"><circle cx="8" cy="8" r="7" fill="none" stroke="#444" stroke-width="1.300"/><path d="M5 8h6M8 5v6" stroke="#000" stroke-width="1.500"/></symbol>
<symbol id="d15" viewBox="0 0 16 16"><path d="M4 9l4-8 4 8M5 6.500h6M3 9h3M10 9h3" fill="none" stroke="#1d4a80" stroke-width="2"/><path d="M.5 9v7M15.500 9v7M1 13h14" class="k"/><path d="M1 13l3-2v4zM15 13l-3-2v4z"/></symbol>
<symbol id="d16" viewBox="0 0 16 16"><path d="M14 0l1 2-6 8-3 2 1-3z" fill="#e8a030" stroke="#8a3a20" stroke-width=".8"/><path d="M.5 9v7M15.500 9v7M1 13h14" class="k"/><path d="M1 13l3-2v4zM15 13l-3-2v4z"/></symbol>
<symbol id="d17" viewBox="0 0 16 16"><path d="M2.500 0v8M15.500 0v12M3 3.500h12" stroke="#1d4a80" stroke-width="1.500"/><path d="M3 3.500l3-2.500v5zM15 3.500l-3-2.500v5z" fill="#1d4a80"/><path d="M.5 6v10M13.500 6v10M1 10.500h12" class="k"/><path d="M1 10.500l3-2v4zM13 10.500l-3-2v4z"/></symbol>
<symbol id="qadd" viewBox="0 0 16 16"><path d="M.5.500h15v15H.5z" fill="none" stroke="#000" stroke-dasharray="1 1"/><path d="M2.500 2.500h11v11h-11z" fill="none" stroke="#000" stroke-dasharray="1 1"/><path d="M4 4h8v8H4z" fill="#cfe0f0"/><path d="M8 5v6M5 8h6" stroke="#1d4a80" stroke-width="2"/></symbol>
<symbol id="qsel" viewBox="0 0 16 16"><path d="M1.500 1.500h10v13h-10z" fill="#eaf2fa" stroke="#5a86b0"/><path d="M5 1l5 5M10 1L5 6" stroke="#e02020" stroke-width="1.500"/><path d="M8 5v9l2-2 2 4 1-1-1-3h3z" fill="#fff" stroke="#222"/></symbol>
<symbol id="qfil" viewBox="0 0 16 16"><path d="M0 2c3-2 9-2 12 0L8 8v7H5V8z" fill="#4c7eb0" stroke="#1d4a80"/><ellipse cx="6" cy="2.500" rx="4" ry="1" fill="#bcd"/><path d="M13 5l-4 6h3l-2 5 6-7h-3l2-4z" fill="#ffd820" stroke="#a07c10" stroke-width=".7"/></symbol>
<symbol id="info" viewBox="0 0 16 16"><circle cx="8" cy="8" r="7.500" fill="#1f52b0" stroke="#8ea4c8"/><path d="M8 3v2M6.500 7H8v5M6 12.500h4" fill="none" stroke="#fff" stroke-width="2"/></symbol>
<symbol id="warn" viewBox="0 0 18 16"><path d="M1 3l6 5M2 14l6-8M9 1L6 6" stroke="#4a6a8c" stroke-width="2"/><path d="M10.500 4l6.500 11H4z" fill="#ffd928" stroke="#a88810"/><path d="M10.500 8v3M10.500 12.500v1.500" stroke="#000" stroke-width="1.500"/></symbol>
<symbol id="tlock" viewBox="0 0 16 16"><path d="M9 8V4c0-4 5-4 5 0v2" fill="none" stroke="#8a7c10" stroke-width="2"/><path d="M1 7h10v8H1z" fill="#e8d420" stroke="#333"/><path d="M1 9.500h10M1 12.500h10" stroke="#8a7c10"/><path d="M5 9h2v4H5z"/></symbol>
<symbol id="ttag" viewBox="0 0 16 16"><path d="M6 4l9 5-5 6-8-6z" fill="#a8bed0" stroke="#5a7490"/><path d="M1 0l6 6M5 2L1 6" stroke="#111" stroke-width="1.500"/><circle cx="3" cy="3" r="2" fill="#e8e0b0" stroke="#222"/></symbol>
<symbol id="tclean" viewBox="0 0 16 16"><path d="M1 1h14v14H1z" fill="#fff" stroke="#1d4a80" stroke-width="2"/><path d="M3.500 3.500h9v9h-9z" fill="url(#gb)" stroke="#4a7aa8"/></symbol>
<symbol id="elbow" viewBox="0 0 12 4" overflow="visible"><path d="M0 2h9v2H0z" fill="#0f0"/><path d="M8 3h3v1H8zM10 1h1v3h-1z" fill="#ff0"/></symbol>
<symbol id="cap" viewBox="0 0 16 4" overflow="visible"><path d="M0 1h11v2H0zM3 0h2v1H3zM6 0h2v1H6zM0 3h2v1H0zM12 1h4v2h-4z" fill="#ff0"/></symbol>
</defs>
</svg>

<header>
<nav class="menu">
<svg class="ic"><use href="#app"/></svg>
<button>File</button><button>Edit</button><button>View</button><button>Insert</button><button>Format</button><button>Tools</button><button>Draw</button><button>Dimension</button><button>Modify</button><button>Window</button><button>Help</button><button>Express</button><button>Sheets Metal</button>
<span class="winctl">
<button aria-label="Minimize"><svg viewBox="0 0 10 10"><path d="M2 8h6" stroke-width="2"/></svg></button>
<button aria-label="Restore"><svg viewBox="0 0 10 10"><path d="M1.500 4.500h5v4h-5zM3.500 4V1.500h5v4H7M1 5h6M3 2h6"/></svg></button>
<button aria-label="Close"><svg viewBox="0 0 10 10"><path d="M2 2l6 6M8 2L2 8" stroke-width="2"/></svg></button>
</span>
</nav>

<div class="dock">
<div class="bar"><i class="grip"></i>
<button aria-label="New"><svg class="ic"><use href="#new"/></svg></button><button aria-label="Open"><svg class="ic"><use href="#open"/></svg></button><button aria-label="Save"><svg class="ic"><use href="#save"/></svg></button><i class="sep"></i>
<button aria-label="Plot"><svg class="ic"><use href="#print"/></svg></button><button aria-label="Plot preview"><svg class="ic"><use href="#preview"/></svg></button><button aria-label="Publish"><svg class="ic"><use href="#publish"/></svg></button><button aria-label="DWF"><svg class="ic"><use href="#web"/></svg></button><i class="sep"></i>
<button aria-label="Cut"><svg class="ic"><use href="#cut"/></svg></button><button aria-label="Copy"><svg class="ic"><use href="#copy"/></svg></button><button aria-label="Paste"><svg class="ic"><use href="#paste"/></svg></button><button aria-label="Match properties"><svg class="ic"><use href="#match"/></svg></button><button aria-label="Block editor"><svg class="ic"><use href="#block"/></svg></button><i class="sep"></i>
<button aria-label="Undo"><svg class="ic"><use href="#undo"/></svg></button><button class="drop" aria-label="Undo list"><i class="tri navy"></i></button><button aria-label="Redo"><svg class="ic"><use href="#redo"/></svg></button><button class="drop" aria-label="Redo list"><i class="tri pale"></i></button><i class="sep"></i>
<button aria-label="Pan"><svg class="ic"><use href="#pan"/></svg></button><button aria-label="Zoom realtime"><svg class="ic"><use href="#zoomrt"/></svg></button><button aria-label="Zoom window"><svg class="ic"><use href="#zoomwin"/></svg></button><button aria-label="Zoom previous"><svg class="ic"><use href="#zoomprev"/></svg></button><i class="sep"></i>
<button aria-label="Properties"><svg class="ic"><use href="#props"/></svg></button><button aria-label="Design center"><svg class="ic"><use href="#dcenter"/></svg></button><button aria-label="Tool palettes"><svg class="ic"><use href="#tools"/></svg></button><button aria-label="Sheet set"><svg class="ic"><use href="#sheets"/></svg></button><button aria-label="Markup"><svg class="ic"><use href="#markup"/></svg></button><button aria-label="Calculator"><svg class="ic"><use href="#calc"/></svg></button><i class="sep"></i>
<button aria-label="Help"><svg class="ic"><use href="#help"/></svg></button></div>
<div class="bar"><i class="grip"></i>
<button aria-label="Text style"><svg class="ic"><use href="#tstyle"/></svg></button><span class="combo w100"><select aria-label="Text style name"><option>CrossX_Table_T</option></select></span><i class="sep"></i>
<button aria-label="Dimension style"><svg class="ic"><use href="#dstyle"/></svg></button><span class="combo w100"><select aria-label="Dimension style name"><option>ISO-25</option></select></span><i class="sep"></i>
<button aria-label="Table style"><svg class="ic"><use href="#tbstyle"/></svg></button><span class="combo w100"><select aria-label="Table style name"><option>Standard</option></select></span></div>
<div class="bar"><i class="grip"></i>
<button aria-label="Sheet 1"><svg class="ic"><use href="#sm1"/></svg></button><button aria-label="Sheet 2"><svg class="ic"><use href="#sm2"/></svg></button><button aria-label="Sheet 3"><svg class="ic"><use href="#sm3"/></svg></button><button aria-label="Sheet 4"><svg class="ic"><use href="#sm4"/></svg></button></div>
<div class="bar"><i class="grip"></i>
<button aria-label="Light on"><svg class="ic"><use href="#bulb"/></svg></button><button class="hot" aria-label="Light off"><svg class="ic"><use href="#bulboff"/></svg><svg class="cursor" viewBox="0 0 12 19"><path d="M.5.500v15l3.500-3 2.500 6 2.500-1-2.500-6h5z"/></svg></button></div>
</div>

<div class="dock">
<div class="bar"><i class="grip"></i>
<button aria-label="Layer manager"><svg class="ic"><use href="#layers"/></svg></button><span class="combo w300 state"><svg class="ic"><use href="#lamp"/></svg><svg class="ic"><use href="#sun"/></svg><svg class="ic"><use href="#freeze"/></svg><svg class="ic"><use href="#lock"/></svg><i class="swatch"></i><select aria-label="Layer"><option>0</option></select></span><button aria-label="Make layer current"><svg class="ic"><use href="#lcur"/></svg></button><button aria-label="Layer previous"><svg class="ic"><use href="#lprev"/></svg></button></div>
<div class="bar"><i class="grip narrow"></i>
<span class="combo w150"><i class="swatch"></i><select aria-label="Color"><option>ByLayer</option></select></span><i class="sep"></i>
<span class="combo w160"><i class="ltype"></i><select aria-label="Linetype"><option>ByLayer</option></select></span><i class="sep"></i>
<span class="combo w125"><i class="ltype short"></i><select aria-label="Lineweight"><option>ByLayer</option></select></span><i class="sep"></i>
<span class="combo w120 off"><select disabled aria-label="Plot style"><option>ByColor</option></select></span></div>
<div class="bar"><i class="grip"></i>
<button aria-label="Contour"><svg class="ic"><use href="#cc"/></svg></button><button aria-label="Colored contour"><svg class="ic"><use href="#ccc"/></svg></button><button aria-label="Profile"><svg class="ic"><use href="#prof"/></svg></button><button aria-label="Surface"><svg class="ic"><use href="#ccb"/></svg></button><button aria-label="Numbering"><svg class="ic"><use href="#six"/></svg></button><button aria-label="Parcels"><svg class="ic"><use href="#bits"/></svg></button><button aria-label="Channel"><svg class="ic"><use href="#chan"/></svg></button></div>
<div class="bar"><i class="grip"></i>
<button aria-label="Cone"><svg class="ic"><use href="#p1"/></svg></button><button aria-label="Cone branch"><svg class="ic"><use href="#p2"/></svg></button><button aria-label="Cylinder"><svg class="ic"><use href="#p3"/></svg></button><button aria-label="Branch"><svg class="ic"><use href="#p4"/></svg></button><button aria-label="Oblique branch"><svg class="ic"><use href="#p4"/></svg></button><button aria-label="Transition"><svg class="ic"><use href="#p5"/></svg></button><button aria-label="Elbow"><svg class="ic"><use href="#p6"/></svg></button><button aria-label="Sphere"><svg class="ic"><use href="#p7"/></svg></button><button aria-label="Hopper"><svg class="ic"><use href="#p8"/></svg></button><button aria-label="Breeches"><svg class="ic"><use href="#p9"/></svg></button><button aria-label="Y piece"><svg class="ic"><use href="#p10"/></svg></button></div>
</div>
</header>

<div class="body">
<main>
<div class="work">
<div class="vstack">
<div class="vbar"><i class="hgrip"></i>
<button aria-label="Line"><svg class="ic"><use href="#line"/></svg></button><button aria-label="Construction line"><svg class="ic"><use href="#xline"/></svg></button><button aria-label="Polyline"><svg class="ic"><use href="#pline"/></svg></button><button aria-label="Polygon"><svg class="ic"><use href="#poly"/></svg></button><button aria-label="Rectangle"><svg class="ic"><use href="#rect"/></svg></button><button aria-label="Arc"><svg class="ic"><use href="#arc"/></svg></button><button aria-label="Circle"><svg class="ic"><use href="#circle"/></svg></button><button aria-label="Revision cloud"><svg class="ic"><use href="#cloud"/></svg></button><button aria-label="Spline"><svg class="ic"><use href="#spline"/></svg></button><button aria-label="Ellipse"><svg class="ic"><use href="#ellip"/></svg></button><button aria-label="Ellipse arc"><svg class="ic"><use href="#earc"/></svg></button><button aria-label="Insert block"><svg class="ic"><use href="#insblk"/></svg></button><button aria-label="Make block"><svg class="ic"><use href="#mkblk"/></svg></button><button aria-label="Point"><svg class="ic"><use href="#point"/></svg></button><button aria-label="Hatch"><svg class="ic"><use href="#hatch"/></svg></button><button aria-label="Gradient"><svg class="ic"><use href="#grad"/></svg></button><button aria-label="Region"><svg class="ic"><use href="#region"/></svg></button><button aria-label="Table"><svg class="ic"><use href="#table"/></svg></button><button aria-label="Multiline text"><svg class="ic"><use href="#mtext"/></svg></button></div>
<div class="vbar"><i class="hgrip"></i>
<button aria-label="Annotate"><svg class="ic"><use href="#dasha"/></svg></button><button aria-label="Render"><svg class="ic"><use href="#ball"/></svg></button><button aria-label="Shapes"><svg class="ic"><use href="#shapes"/></svg></button><button aria-label="3D view"><svg class="ic"><use href="#cube"/></svg></button><button aria-label="Orbit"><svg class="ic"><use href="#orbit"/></svg></button><button aria-label="Free orbit"><svg class="ic"><use href="#sph"/></svg></button><button aria-label="Walk"><svg class="ic"><use href="#land"/></svg></button></div>
</div>

<section class="view">
<svg class="model" role="img" aria-label="Cross sections">
<g transform="translate(-27.5 -78.500)">
<g class="r">
<path d="M494 79V85M507 79V85M547 79V85M560 79V85M627 79V85M693 79V85"/>
<path d="M462 141H726M462 148H726M462 155H726M462 161H726M462 168H726M462 174H726M462 181H726M494 135V188M507 135V188M547 135V188M560 135V188M587 135V188M667 135V188M693 135V188"/>
<path d="M455 244H726M455 251H726M455 257H726M455 264H726M455 271H726M455 277H726M455 284H726M455 291H726M455 297H726M488 237V304M507 237V304M547 237V304M560 237V304M587 237V304M667 237V304M693 237V304"/>
<path d="M455 360H759M455 367H759M455 373H759M455 380H759M455 387H759M455 393H759M455 400H759M455 407H759M488 354V413M507 354V413M547 354V413M560 354V413M613 354V413M693 354V413M726 354V413"/>
<path d="M455 470H759M455 476H759M455 483H759M455 489H759M455 496H759M455 503H759M455 509H759M488 463V516M507 463V516M547 463V516M560 463V516M620 463V516M726 463V516"/>
<path d="M429 572H793M429 579H793M429 586H793M429 592H793M429 599H793M429 605H793M461 566V612M481 566V612M494 566V612M527 566V612M560 566V612M627 566V612M693 566V612M759 566V612"/>
</g>
<g class="bl">
<path d="M495 152H498M498 151H504M504 150H554M554 151H628M628 152H669L693 160"/>
<path d="M489 256H492M498 258H504M504 259H549L560 262H565M565 263H571M577 265H584M584 266H669L693 276"/>
<path d="M489 369H492M492 370H498M498 371H504M504 372H551M557 374H566M566 375H576M576 376H587M587 377H598M598 378H608M608 379H698M706 381H714M714 382H722M722 383H726"/>
<path d="M489 479H493M493 480H503M503 481H554M554 482H591"/>
<path d="M462 584H471M471 583H488M488 582H544M544 583H594M594 584H660M660 583H759"/>
</g>
<g class="gr">
<path d="M448 79V102H726V79M461 79V102M448 85H726M448 93H726"/>
<path d="M448 135H726V204H448ZM461 135V204M448 188H726M448 196H726"/>
<path d="M441 237H726V320H441ZM454 237V320M441 304H726M441 312H726"/>
<path d="M441 354H759V430H441ZM454 354V430M441 413H759M441 421H759"/>
<path d="M441 463H759V533H441ZM454 463V533M441 516H759M441 524H759"/>
<path d="M415 566H793V629H415ZM428 566V629M415 612H793M415 620H793"/>
</g>
<g class="lab" transform="translate(0 -.500)">
<path d="M451 79H459M451 142H459M451 148H459M451 155H459M451 162H459M451 168H459M451 175H459M451 181H459"/>
<path d="M444 245H452M444 251H452M444 258H452M444 265H452M444 271H452M444 278H452M444 285H452M444 291H452M444 298H452"/>
<path d="M444 361H452M444 367H452M444 374H452M444 381H452M444 387H452M444 394H452M444 401H452M444 407H452"/>
<path d="M444 470H452M444 477H452M444 483H452M444 490H452M444 496H452M444 503H452M444 510H452"/>
<path d="M418 573H426M418 579H426M418 586H426M418 593H426M418 599H426M418 606H426"/>
<path d="M449 90H456M457 90H461M450 98H461M449 193H456M457 193H461M449 201H461M442 309H449M450 309H454M443 317H454M442 418H454M443 426H454M442 521H454M443 529H454M416 617H423M424 617H428M416 625H427"/>
<path class="tick" d="M452 88V91M454 88V91M454 96V99M452 190V194M454 199V202M445 306V310M447 306V310M448 315V318M445 416V419M447 416V419M448 424V427M445 519V522M448 518V521M448 527V530M418 615V618M421 615V618M421 623V626M446 244V247M449 244V247M452 244V247M447 264V267M447 360V363M447 380V383M447 400V403M446 496V499"/>
</g>
<g class="ye" transform="translate(-.5 0)">
<path class="w2" d="M508 86V92M508 95V101M548 86V92M548 95V101M561 86V92M561 95V101M627 86V92M627 94V101"/>
<path class="w3" d="M494.500 86V92M494.500 94V101M693.500 86V92M693.500 94V101"/>
<path class="w2" d="M508 189V195M508 197V204M548 189V195M548 197V204M561 189V195M561 197V204M667 189V195M667 197V204"/>
<path class="w3" d="M494.500 189V195M494.500 197V204M587.500 189V195M587.500 198V203M693.500 189V195M693.500 197V204"/>
<path class="w2" d="M488 305V311M488 313V320M508 305V311M508 314V320M548 305V311M548 314V320M561 305V311M561 314V320M667 305V311M667 313V320"/>
<path class="w3" d="M587.500 305V311M587.500 314V319M693.500 305V311M693.500 313V320"/>
<path class="w2" d="M488 414V420M488 422V430M508 415V420M508 423V429M548 414V420M548 423V429M561 414V420M561 423V429M614 414V420M614 423V429M727 414V420M727 422V430"/>
<path class="w3" d="M693.500 414V420M693.500 422V430"/>
<path class="w2" d="M488 517V523M488 525V532M508 517V523M508 526V532M548 517V523M548 526V532M561 517V523M561 526V532M727 517V523M727 525V533"/>
<path class="w3" d="M620.500 517V523M620.500 526V532"/>
<path class="w2" d="M528 613V619M528 622V628M561 613V619M561 622V628M627 613V619M627 621V629M760 613V619M760 621V629"/>
<path class="w3" d="M461.500 613V619M461.500 621V629M481.500 613V619M481.500 622V629M494.500 613V619M494.500 622V629M693.500 613V619M693.500 621V629"/>
</g>
<g transform="translate(-.5 -.500)">
<use href="#elbow" x="496" y="141" width="12" height="4"/><use href="#elbow" x="536" y="141" width="12" height="4"/>
<use href="#elbow" x="496" y="250" width="12" height="4"/><use href="#elbow" x="536" y="250" width="12" height="4"/>
<use href="#elbow" x="496" y="363" width="12" height="4"/><use href="#elbow" x="536" y="363" width="12" height="4"/>
<use href="#elbow" x="496" y="472" width="12" height="4"/><use href="#elbow" x="536" y="472" width="12" height="4"/>
<use href="#elbow" x="483" y="573" width="12" height="4"/><use href="#elbow" x="516" y="573" width="12" height="4"/>
<use href="#cap" x="553" y="104" width="16" height="4"/><use href="#cap" x="553" y="207" width="16" height="4"/><use href="#cap" x="553" y="323" width="16" height="4"/><use href="#cap" x="553" y="432" width="16" height="4"/><use href="#cap" x="553" y="535" width="16" height="4"/><use href="#cap" x="553" y="631" width="16" height="4"/>
</g>
<g class="ucs">
<path d="M39 621H50V632H39ZM45 621V572M40 572L45 559L50 572ZM50 627H99M99 622L113 627L99 632Z"/>
<path class="dim" d="M43 572L45 560L47 572M99 625L112 627L99 629"/>
<text x="47" y="549">Y</text><text x="129" y="634">X</text>
</g>
</g>
</svg>
<div class="tabs">
<button class="nav" aria-label="First layout"><svg viewBox="0 0 10 10"><path d="M1 0h1.500v10H1zM9 0v10L4 5z"/></svg></button><button class="nav" aria-label="Previous layout"><svg viewBox="0 0 10 10"><path d="M7 0v10L2 5z"/></svg></button><button class="nav" aria-label="Next layout"><svg viewBox="0 0 10 10"><path d="M3 0v10l5-5z"/></svg></button><button class="nav" aria-label="Last layout"><svg viewBox="0 0 10 10"><path d="M8 0h1.500v10H8zM1 0v10l5-5z"/></svg></button>
<button class="tab on"><svg viewBox="0 0 46 15" preserveAspectRatio="none"><path d="M0 0h46l-4 14.500H5z"/></svg><span>Model</span></button><button class="tab"><svg viewBox="0 0 46 15" preserveAspectRatio="none"><path d="M4.500-1L.5 14.500H42L45.500-1"/></svg><span>Layout1</span></button><button class="tab"><svg viewBox="0 0 46 15" preserveAspectRatio="none"><path d="M4.500-1L.5 14.500H42L45.500-1"/></svg><span>Layout2</span></button>
</div>
</section>

<div class="vbar right"><i class="hgrip"></i>
<button aria-label="Erase"><svg class="ic"><use href="#erase"/></svg></button><button aria-label="Copy object"><svg class="ic"><use href="#mcopy"/></svg></button><button aria-label="Mirror"><svg class="ic"><use href="#mirror"/></svg></button><button aria-label="Offset"><svg class="ic"><use href="#offset"/></svg></button><button aria-label="Array"><svg class="ic"><use href="#array"/></svg></button><button aria-label="Move"><svg class="ic"><use href="#move"/></svg></button><button aria-label="Rotate"><svg class="ic"><use href="#rot"/></svg></button><button aria-label="Scale"><svg class="ic"><use href="#scale"/></svg></button><button aria-label="Stretch"><svg class="ic"><use href="#stretch"/></svg></button><button aria-label="Trim"><svg class="ic"><use href="#trim"/></svg></button><button aria-label="Extend"><svg class="ic"><use href="#extend"/></svg></button><button aria-label="Break at point"><svg class="ic"><use href="#brkpt"/></svg></button><button aria-label="Break"><svg class="ic"><use href="#brk"/></svg></button><button aria-label="Join"><svg class="ic"><use href="#join"/></svg></button><button aria-label="Chamfer"><svg class="ic"><use href="#chamf"/></svg></button><button aria-label="Fillet"><svg class="ic"><use href="#fillet"/></svg></button><button aria-label="Explode"><svg class="ic"><use href="#explode"/></svg></button></div>
</div>

<div class="dock low">
<div class="bar"><i class="grip"></i>
<button aria-label="Tracking point"><svg class="ic"><use href="#o1"/></svg></button><button aria-label="Snap from"><svg class="ic"><use href="#o2"/></svg></button><i class="sep"></i>
<button aria-label="Endpoint"><svg class="ic"><use href="#o3"/></svg></button><button aria-label="Midpoint"><svg class="ic"><use href="#o4"/></svg></button><button aria-label="Intersection"><svg class="ic"><use href="#o5"/></svg></button><button aria-label="Apparent intersection"><svg class="ic"><use href="#o6"/></svg></button><button aria-label="Extension"><svg class="ic"><use href="#o7"/></svg></button><i class="sep"></i>
<button aria-label="Center"><svg class="ic"><use href="#o8"/></svg></button><button aria-label="Quadrant"><svg class="ic"><use href="#o9"/></svg></button><button aria-label="Tangent"><svg class="ic"><use href="#o10"/></svg></button><i class="sep"></i>
<button aria-label="Perpendicular"><svg class="ic"><use href="#o11"/></svg></button><button aria-label="Parallel"><svg class="ic"><use href="#o12"/></svg></button><button aria-label="Insertion"><svg class="ic"><use href="#o13"/></svg></button><button aria-label="Node"><svg class="ic"><use href="#o14"/></svg></button><i class="sep"></i>
<button aria-label="Nearest"><svg class="ic"><use href="#o15"/></svg></button><button aria-label="Snap none"><svg class="ic"><use href="#o16"/></svg></button><i class="sep"></i>
<button aria-label="Snap settings"><svg class="ic"><use href="#o17"/></svg></button></div>
<div class="bar"><i class="grip"></i>
<button aria-label="Linear"><svg class="ic"><use href="#d1"/></svg></button><button aria-label="Aligned"><svg class="ic"><use href="#d2"/></svg></button><button aria-label="Arc length"><svg class="ic"><use href="#d3"/></svg></button><button aria-label="Ordinate"><svg class="ic"><use href="#d4"/></svg></button><i class="sep"></i>
<button aria-label="Radius"><svg class="ic"><use href="#d5"/></svg></button><button aria-label="Jogged"><svg class="ic"><use href="#d6"/></svg></button><button aria-label="Diameter"><svg class="ic"><use href="#d7"/></svg></button><button aria-label="Angular"><svg class="ic"><use href="#d8"/></svg></button><i class="sep"></i>
<button aria-label="Quick dimension"><svg class="ic"><use href="#d9"/></svg></button><button aria-label="Baseline"><svg class="ic"><use href="#d10"/></svg></button><button aria-label="Continue"><svg class="ic"><use href="#d11"/></svg></button><i class="sep"></i>
<button aria-label="Quick leader"><svg class="ic"><use href="#d12"/></svg></button><button aria-label="Tolerance"><svg class="ic"><use href="#d13"/></svg></button><button aria-label="Center mark"><svg class="ic"><use href="#d14"/></svg></button><i class="sep"></i>
<button aria-label="Dimension edit"><svg class="ic"><use href="#d15"/></svg></button><button aria-label="Dimension text edit"><svg class="ic"><use href="#d16"/></svg></button><button aria-label="Dimension update"><svg class="ic"><use href="#d17"/></svg></button><i class="sep"></i>
<span class="combo w100"><select aria-label="Current dimension style"><option>ISO-25</option></select></span><button aria-label="Style settings"><svg class="ic"><use href="#dstyle"/></svg></button></div>
</div>

<div class="cmd"><i class="grip"></i>
<div class="cmdbox">
<div class="log"><div>Command:<br>Command:<br>Command:<br>Select objects: *Cancel*<br>; error: Function cancelled<br>Command:</div><button class="up" aria-label="Scroll up"></button></div>
<div class="entry"><label for="cmdline">Command:</label><input id="cmdline" type="text"></div>
</div></div>
</main>

<aside>
<div class="phead"><button aria-label="Minimize palette"><svg viewBox="0 0 10 10"><path d="M2 5h6"/></svg></button><i></i><button aria-label="Close palette"><svg viewBox="0 0 10 10"><path d="M2 2l6 6M8 2L2 8"/></svg></button></div>
<div class="psel"><span class="combo"><select aria-label="Selection"><option>No selection</option></select></span><div class="pbtn"><button aria-label="Toggle pickadd"><svg class="ic"><use href="#qadd"/></svg></button><button aria-label="Select objects"><svg class="ic"><use href="#qsel"/></svg></button><button aria-label="Quick select"><svg class="ic"><use href="#qfil"/></svg></button></div></div>

<section class="grp"><h2>General<svg viewBox="0 0 10 10"><path d="M1 5l4-4 4 4M1 9l4-4 4 4"/></svg></h2>
<table><tr><th>Color</th><td><i class="swatch"></i>ByLayer</td></tr><tr><th>Layer</th><td>0</td></tr><tr><th>Linetype</th><td><i class="dash"></i>ByLayer</td></tr><tr><th>Linetyp...</th><td>1.0000</td></tr><tr><th>Linewei...</th><td><i class="dash"></i>ByLayer</td></tr><tr><th>Thickn...</th><td>0.0000</td></tr></table></section>
<section class="grp"><h2>3D Visualization<svg viewBox="0 0 10 10"><path d="M1 5l4-4 4 4M1 9l4-4 4 4"/></svg></h2>
<table><tr><th>Material</th><td>ByLayer</td></tr><tr><th>Shado...</th><td>Casts and Rec...</td></tr></table></section>
<section class="grp"><h2>Plot style<svg viewBox="0 0 10 10"><path d="M1 5l4-4 4 4M1 9l4-4 4 4"/></svg></h2>
<table><tr><th>Plot style</th><td>ByColor</td></tr><tr><th>Plot sty...</th><td>None</td></tr><tr><th>Plot ta...</th><td>Model</td></tr><tr><th>Plot ta...</th><td>Not available</td></tr></table></section>
<section class="grp"><h2>View<svg viewBox="0 0 10 10"><path d="M1 5l4-4 4 4M1 9l4-4 4 4"/></svg></h2>
<table><tr><th>Center X</th><td>1323.3216</td></tr><tr><th>Center Y</th><td>200.0089</td></tr><tr><th>Center Z</th><td>0.0000</td></tr><tr><th>Height</th><td>85.3619</td></tr><tr><th>Width</th><td>194.2512</td></tr></table></section>
<section class="grp"><h2>Misc<svg viewBox="0 0 10 10"><path d="M1 5l4-4 4 4M1 9l4-4 4 4"/></svg></h2>
<table><tr><th>UCS ic...</th><td>Yes</td></tr><tr><th>UCS ic...</th><td>Yes</td></tr><tr><th>UCS pe...</th><td>Yes</td></tr><tr><th>UCS Na...</th><td></td></tr><tr><th>Visual S...</th><td>2D Wireframe</td></tr></table></section>
</aside>
</div>

<footer>
<output class="coord">1325.9247, 209.6362, 0.0000</output>
<button>SNAP</button><button>GRID</button><button>ORTHO</button><button>POLAR</button><button>OSNAP</button><button class="down">OTRACK</button><button>DUCS</button><button class="down">DYN</button><button>LWT</button><button class="down">MODEL</button>
<div class="tray"><span class="box"><svg class="ic wide"><use href="#warn"/></svg><svg class="ic"><use href="#tlock"/></svg><svg class="ic"><use href="#ttag"/></svg></span><i class="tri"></i><svg class="ic"><use href="#tclean"/></svg><svg class="size" viewBox="0 0 12 12"><path d="M9 1h2v2H9zM9 5h2v2H9zM5 5h2v2H5zM9 9h2v2H9zM5 9h2v2H5zM1 9h2v2H1z"/></svg></div>
</footer>

<div class="balloon" role="dialog" aria-label="Communication Center">
<div class="btop"><svg class="ic"><use href="#info"/></svg><h3>Communication Center</h3><button class="x" aria-label="Close message"><svg viewBox="0 0 10 10"><path d="M1.500 1.500l7 7M8.500 1.500l-7 7"/></svg></button></div>
<p>The easy way to keep you and your software up-to-date.</p><a href="#">Click here.</a>
<svg class="tail" viewBox="0 0 20 20"><path d="M.5 0L18.500 18.500V0"/></svg>
</div>
</body>
</html>
```
FILE: styles.css
```css
* { box-sizing: border-box; }
html, body { height: 100%; }
body {
  margin: 0;
  display: flex;
  flex-direction: column;
  height: 100vh;
  overflow: hidden;
  position: relative;
  background: #f6f6f5;
  border-right: 1px solid #35707f;
  color: #000;
  font: 12px/16px Roboto, "Open Sans", sans-serif;
}
button, select, input { font: inherit; color: inherit; }
button { padding: 0; border: 0; background: none; display: inline-flex; align-items: center; justify-content: center; flex: none; }
.sprite { position: absolute; width: 0; height: 0; }
.ic { width: 16px; height: 16px; flex: none; display: block; }
.ic.wide { width: 18px; }
.k { fill: none; stroke: #000; }
.g { fill: none; stroke: #444; stroke-width: 1.3; }
.n { fill: #1c6cc0; stroke: none; }
.o { fill: #fff; stroke: #1c6cc0; }
.y { fill: #f4e88c; stroke: #20406c; }
.q { font: bold 13px "Liberation Sans", sans-serif; fill: #fff; }
.ai { font: italic bold 16px "Liberation Sans", sans-serif; }
.ma { font: 18px "Liberation Sans", sans-serif; }
.s6 { font: bold 11px "Liberation Sans", sans-serif; }
.red { fill: #e02020; }
.blu { fill: #2060d0; }

/* Menu */
.menu { display: flex; height: 21px; padding-left: 8px; align-items: center; color: #6a6a6a; font-family: "Open Sans", "Noto Sans", sans-serif; }
.menu > button { padding: 0 6px; height: 20px; }
.menu > .ic { width: 15px; }
.winctl { margin-left: auto; display: flex; gap: 9px; padding-right: 6px; }
.winctl svg { width: 10px; height: 10px; fill: none; stroke: #8ea4b4; }

/* Toolbars */
.dock { display: flex; gap: 2px; height: 27px; }
.dock + .dock { height: 28px; }
.bar { display: flex; align-items: center; padding-top: 3px; border: solid #a0a0a0; border-width: 0 1px 1px 0; }
.bar:not(:has(.combo:last-child)) { padding-right: 3px; }
.bar > button { width: 23px; height: 22px; }
.bar > .drop { width: 13px; }
.grip { flex: none; align-self: stretch; width: 5px; margin: 0 2px 0 5px; border: solid #a0a0a0; border-width: 0 1px; }
.grip.narrow { margin-right: 3px; }
.sep { flex: none; width: 6px; height: 18px; border-left: 1px solid #909090; margin-left: 3px; margin-right: -3px; }
.combo + .sep { height: 20px; margin-left: 2px; margin-right: -2px; }
.tri { border: 3px solid transparent; border-top-color: #000; border-bottom: 0; width: 0; }
.navy { border-top-color: #101878; }
.pale { border-top-color: #b4babf; }

.combo { display: flex; align-items: center; height: 22px; border: 1px solid #6e6e6e; padding: 0 5px 0 3px; background: #f6f6f5; flex: none; }
.combo select { flex: 1; min-width: 0; height: 18px; padding: 0; border: 0; background: transparent; appearance: none; overflow: hidden; }
.combo::after { content: ""; flex: none; width: 6px; height: 6px; margin: -4px 0 0 2px; border: solid #505050; border-width: 0 1px 1px 0; transform: rotate(45deg); }
.combo.off { border-color: #bdbdbd; color: #8c8c8c; padding-left: 9px; }
.combo.off select { opacity: 1; color: #8c8c8c; }
.combo.off::after { border-color: #a0a0a0; }
.w100 { width: 100px; }
.w120 { width: 120px; margin-right: 2px; }
.w125 { width: 125px; }
.w150 { width: 150px; }
.w160 { width: 160px; }
.w300 { width: 300px; }
.bar > .combo:last-child { margin-right: 3px; }
.bar > .state { gap: 1px; margin-left: 1px; padding-left: 2px; }
.state .swatch { margin: 0 4px 0 0; }
.swatch { flex: none; display: inline-block; width: 10px; height: 10px; border: 1px solid #000; background: #fff; margin: 0 5px 0 2px; }
.ltype { flex: none; width: 60px; height: 1px; background: #000; margin: 0 5px 0 1px; }
.ltype.short { width: 36px; margin-right: 3px; }
.hot { position: relative; }
.cursor { position: absolute; left: 11px; top: 9px; width: 12px; height: 19px; fill: #fff; stroke: #223; z-index: 2; }

/* Work area */
.body { flex: 1; min-height: 0; display: flex; }
main { flex: 1; min-width: 0; display: flex; flex-direction: column; }
.work { flex: 1; min-height: 0; display: flex; overflow: hidden; padding-top: 1px; }
.vstack { width: 25px; overflow: hidden; margin-right: 1px; }
.vbar { display: flex; flex-direction: column; align-items: center; padding: 4px 0; border: solid #a0a0a0; border-width: 0 1px 1px 0; }
.vbar > button { width: 22px; height: 22px; }
.vstack .vbar + .vbar { padding-top: 6px; }
.hgrip { flex: none; width: 20px; height: 5px; margin-bottom: 2px; border: solid #a0a0a0; border-width: 1px 0; }
.vbar.right { width: 25px; align-self: flex-start; margin: 0 4px 0 3px; }
.view { flex: 1; min-width: 0; display: flex; flex-direction: column; }
.model { flex: 1; min-height: 0; width: 100%; display: block; background: #000; border: solid #747474; border-width: 2px 0 0 2px; shape-rendering: crispEdges; }
.r { stroke: #f00; fill: none; }
.bl { stroke: #00f; fill: none; }
.gr { stroke: #0f0; fill: none; }
.lab { stroke: #0f0; stroke-width: 2; fill: none; }
.tick { stroke-width: 1; }
.ye { stroke: #ff0; }
.w2 { stroke-width: 2; }
.w3 { stroke-width: 3; }
.ucs { stroke: #fff; fill: none; }
.dim { stroke: #aaa; }
.ucs text { font: 300 18px "Open Sans", "Noto Sans", sans-serif; fill: #fff; stroke: none; text-anchor: middle; }

.tabs { display: flex; height: 16px; padding-left: 2px; font: 11px/14px "Liberation Sans", sans-serif; }
.nav { width: 18px; height: 16px; border: solid #a0a0a0; border-width: 0 1px 1px 0; }
.nav svg { width: 9px; height: 9px; }
.tab { position: relative; width: 50px; height: 16px; }
.tab.on { width: 43px; margin: 0 -1px 0 4px; color: #fff; }
.tab svg { position: absolute; inset: 0; width: 100%; height: 15px; fill: #fafafa; stroke: #000; }
.tab.on svg { fill: #000; }
.tab span { position: relative; }

.dock.low { height: 29px; }
.low .bar { padding-top: 5px; }
.cmd { display: flex; margin-top: 4px; padding-top: 8px; border-top: 2px solid #808080; }
.cmd .grip { margin: 0 3px 5px 9px; }
.cmdbox { flex: 1; margin-right: 11px; border: solid #6e6e6e; border-width: 2px 0 0 1px; font: 13px/16px "Liberation Mono", monospace; }
.log { display: flex; justify-content: space-between; padding-top: 1px; border-bottom: 1px solid #a0a0a0; }
.up { width: 6px; height: 6px; margin: 8px 6px 0 0; border: solid #606060; border-width: 2px 0 0 2px; transform: rotate(45deg) ; }
.entry { display: flex; align-items: center; height: 20px; padding-top: 1px; }
.entry input { flex: 1; border: 0; padding: 0 8px; background: none; outline: 0; }

/* Properties palette */
aside { width: 189px; border: solid #808080; border-width: 1px 0 0 2px; margin-top: 1px; padding: 6px 7px 0 9px; overflow: hidden; display: flex; flex-direction: column; }
.phead { display: flex; gap: 4px; align-items: center; }
.phead button { width: 10px; height: 10px; border: 1px solid #a0a0a0; }
.phead svg { width: 8px; height: 8px; stroke: #000; stroke-width: 2; }
.phead i { flex: 1; height: 5px; border: solid #a0a0a0; border-width: 1px 0; }
.psel { display: flex; gap: 5px; align-items: center; margin: 7px 0 12px; }
.psel .combo { width: 89px; height: 24px; }
.pbtn { display: flex; border: 1px solid #c4c4c4; }
.pbtn button { width: 24px; height: 23px; }
.pbtn button + button { border-left: 1px solid #c4c4c4; }
.grp { margin: 0 12px 9px 3px; }
h2 { margin: 0; height: 22px; display: flex; align-items: center; justify-content: space-between; padding: 0 6px 0 7px; background: #c3c3c3; font: 600 12px/16px "Open Sans", "Noto Sans", sans-serif; clip-path: polygon(0 4px, 4px 0, calc(100% - 4px) 0, 100% 4px, 100% 100%, 0 100%); }
h2 svg { width: 10px; height: 10px; fill: none; stroke: #fff; stroke-width: 1.3; }
table { border-collapse: separate; border-spacing: 0; table-layout: fixed; width: 140px; margin-left: auto; }
th, td { height: 21px; padding: 0 0 0 2px; border: solid #c3c3c3; border-width: 0 1px 1px 0; font-weight: 400; text-align: left; white-space: nowrap; line-height: 16px; }
th { width: 55px; padding: 0 0 3px 4px; border-left-width: 1px; }
td .swatch { margin: 0 6px -1px 1px; }
.dash { display: inline-block; width: 32px; height: 1px; background: #000; margin: 0 5px 4px 3px; }

/* Status bar */
footer { display: flex; align-items: center; gap: 4px; height: 23px; padding: 4px 2px 0 5px; border-top: 1px solid #a0a0a0; box-shadow: inset 0 1px #f6f6f5, inset 0 2px #c0c0c0; }
footer > button { height: 18px; padding: 1px 2px 0 1px; border: solid #a0a0a0; border-width: 0 1px 1px 0; }
footer > .down { border: solid #000; border-width: 1px 0 0 1px; padding: 2px 1px 0 2px; }
.coord { width: 165px; height: 18px; border: 1px solid #a0a0a0; padding-left: 1px; margin-right: 1px; color: #a0a0a0; }
.tray { margin-left: auto; display: flex; align-items: center; gap: 8px; }
.box { display: flex; gap: 4px; padding: 1px 1px 0 3px; border: solid #a0a0a0; border-width: 1px 0 0 1px; height: 18px; }
.tray .tri { border-width: 4px 4px 0; margin-top: 8px; }
.size { width: 12px; height: 12px; fill: #b0b0b0; margin: 6px 0 0 -4px; }

/* Notification */
.balloon { position: absolute; right: 39px; bottom: 28px; width: 295px; height: 77px; padding: 8px 8px 0 15px; background: #f6f6f5; border: 1px solid #000; border-radius: 14px; line-height: 14px; font-size: 11px; }
.btop { display: flex; align-items: center; gap: 9px; height: 17px; margin-left: -6px; }
h3 { flex: 1; margin: 0; font-size: 12px; line-height: 14px; }
.balloon p { margin: 6px 0 5px; white-space: nowrap; }
.balloon a { color: #0000e0; }
.x { width: 16px; height: 15px; border: 1px solid #a0a0a0; }
.x svg { width: 9px; height: 9px; stroke: #000; stroke-width: 2; }
.tail { position: absolute; right: 66px; top: 75px; width: 20px; height: 20px; fill: #f6f6f5; stroke: #000; }
```
